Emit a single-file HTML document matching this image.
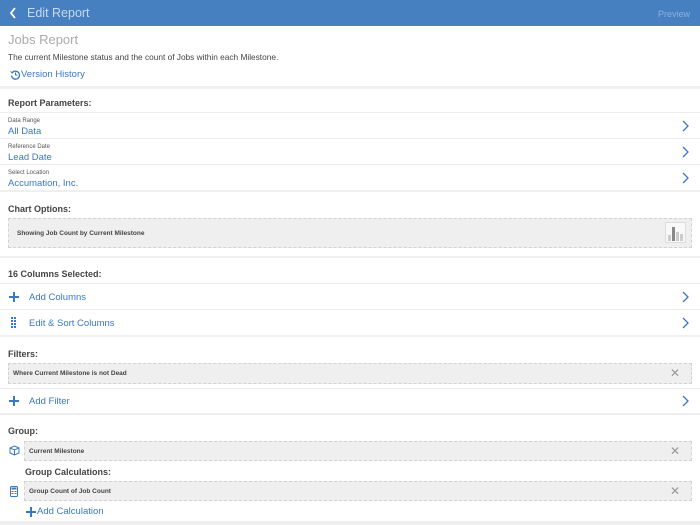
<!DOCTYPE html>
<html><head><meta charset="utf-8"><style>
*{margin:0;padding:0;box-sizing:border-box}
body{width:700px;height:525px;overflow:hidden;background:#fff;font-family:"Liberation Sans",Arial,sans-serif;position:relative;color:#333}
.a{position:absolute;white-space:nowrap}
.hdr{left:0;top:0;width:700px;height:26px;background:#4680c0}
.band{left:0;width:700px;background:#efefef}
.hl{left:0;width:700px;height:1px;background:#ececec}
.h{font-size:9px;font-weight:bold;color:#444}
.lbl{font-size:6px;color:#555}
.val{font-size:9.5px;color:#3a78c4}
.box{left:8px;width:684px;background:#efefef;border:1px dashed #d2d2d2}
.sm{font-size:6.5px;font-weight:bold;color:#444}
.chev{left:680px;width:10px;height:12px}
.x{font-size:12px;color:#999;left:670px}
</style></head><body>
<div class="a hdr"></div>
<svg class="a" style="left:8px;top:7px" width="10" height="12"><path d="M7 1 L3 6 L7 11" stroke="#fff" stroke-width="1.8" fill="none"/></svg>
<div class="a" style="left:27px;top:6px;font-size:12.5px;color:#c8d8ee">Edit Report</div>
<div class="a" style="left:658px;top:9px;font-size:9px;color:#8fb0dc">Preview</div>

<div class="a" style="left:8px;top:32px;font-size:13px;color:#aaa">Jobs Report</div>
<div class="a" style="left:8px;top:52px;font-size:8.3px;color:#444">The current Milestone status and the count of Jobs within each Milestone.</div>
<svg class="a" style="left:10px;top:69px" width="11" height="11"><path d="M2.5 3.5 A4 4 0 1 1 1.5 6.5" stroke="#3a78c4" stroke-width="1.3" fill="none"/><path d="M0.5 2.5 L2.5 4 L3.8 1.8" stroke="#3a78c4" stroke-width="1" fill="none"/><path d="M5.5 3.5 V6 H7.5" stroke="#3a78c4" stroke-width="1" fill="none"/></svg>
<div class="a val" style="left:21px;top:69px;font-size:9.5px">Version History</div>
<div class="a band" style="top:86px;height:3px"></div>

<div class="a h" style="left:8px;top:98px">Report Parameters:</div>
<div class="a hl" style="top:112px"></div>
<div class="a lbl" style="left:8px;top:118px">Data Range</div>
<div class="a val" style="left:8px;top:126px">All Data</div>
<div class="a hl" style="top:138px"></div>
<div class="a lbl" style="left:8px;top:144px">Reference Date</div>
<div class="a val" style="left:8px;top:152px">Lead Date</div>
<div class="a hl" style="top:164px"></div>
<div class="a lbl" style="left:8px;top:170px">Select Location</div>
<div class="a val" style="left:8px;top:178px">Accumation, Inc.</div>
<div class="a band" style="top:190px;height:2px"></div>
<svg class="a chev" style="top:120px"><path d="M3 1 L8 6 L3 11" stroke="#3a78c4" stroke-width="1.3" fill="none"/></svg>
<svg class="a chev" style="top:146px"><path d="M3 1 L8 6 L3 11" stroke="#3a78c4" stroke-width="1.3" fill="none"/></svg>
<svg class="a chev" style="top:172px"><path d="M3 1 L8 6 L3 11" stroke="#3a78c4" stroke-width="1.3" fill="none"/></svg>

<div class="a h" style="left:8px;top:204px">Chart Options:</div>
<div class="a box" style="top:218px;height:30px"></div>
<div class="a sm" style="left:17px;top:230px">Showing Job Count by Current Milestone</div>
<div class="a" style="left:665px;top:222px;width:21px;height:21px;border:1px solid #ddd;background:#f8f8f8"></div>
<svg class="a" style="left:667px;top:224px" width="17" height="17"><rect x="1" y="11" width="3" height="6" fill="#ccc"/><rect x="5" y="3" width="3" height="14" fill="#888"/><rect x="9" y="8" width="3" height="9" fill="#ccc"/><rect x="13" y="10" width="3" height="7" fill="#ccc"/></svg>
<div class="a band" style="top:256px;height:2px"></div>

<div class="a h" style="left:8px;top:269px">16 Columns Selected:</div>
<div class="a hl" style="top:283px"></div>
<svg class="a" style="left:9px;top:292px" width="10" height="10"><path d="M5 0V10M0 5H10" stroke="#3a78c4" stroke-width="2"/></svg>
<div class="a val" style="left:29px;top:292px">Add Columns</div>
<svg class="a chev" style="top:291px"><path d="M3 1 L8 6 L3 11" stroke="#3a78c4" stroke-width="1.3" fill="none"/></svg>
<div class="a hl" style="top:309px"></div>
<svg class="a" style="left:11px;top:317px" width="6" height="11"><g fill="#3a78c4"><rect x="0" y="0" width="2" height="2"/><rect x="3" y="0" width="2" height="2"/><rect x="0" y="3" width="2" height="2"/><rect x="3" y="3" width="2" height="2"/><rect x="0" y="6" width="2" height="2"/><rect x="3" y="6" width="2" height="2"/><rect x="0" y="9" width="2" height="2"/><rect x="3" y="9" width="2" height="2"/></g></svg>
<div class="a val" style="left:29px;top:318px">Edit &amp; Sort Columns</div>
<svg class="a chev" style="top:317px"><path d="M3 1 L8 6 L3 11" stroke="#3a78c4" stroke-width="1.3" fill="none"/></svg>
<div class="a band" style="top:335px;height:2px"></div>

<div class="a h" style="left:8px;top:349px">Filters:</div>
<div class="a box" style="top:363px;height:21px"></div>
<div class="a sm" style="left:13px;top:370px">Where Current Milestone is not Dead</div>
<div class="a x" style="top:366px">✕</div>
<div class="a hl" style="top:388px"></div>
<svg class="a" style="left:9px;top:396px" width="10" height="10"><path d="M5 0V10M0 5H10" stroke="#3a78c4" stroke-width="2"/></svg>
<div class="a val" style="left:29px;top:396px">Add Filter</div>
<svg class="a chev" style="top:395px"><path d="M3 1 L8 6 L3 11" stroke="#3a78c4" stroke-width="1.3" fill="none"/></svg>
<div class="a band" style="top:413px;height:2px"></div>

<div class="a h" style="left:8px;top:426px">Group:</div>
<svg class="a" style="left:9px;top:445px" width="11" height="11"><path d="M5.5 1 L10 3 V8 L5.5 10 L1 8 V3 Z M1 3 L5.5 5 L10 3 M5.5 5 V10" stroke="#3a78c4" stroke-width="1" fill="none"/></svg>
<div class="a box" style="left:24px;width:668px;top:441px;height:20px"></div>
<div class="a sm" style="left:29px;top:448px">Current Milestone</div>
<div class="a x" style="top:444px">✕</div>
<div class="a h" style="left:25px;top:467px">Group Calculations:</div>
<svg class="a" style="left:10px;top:486px" width="8" height="11"><rect x="0.5" y="0.5" width="7" height="10" rx="1" fill="none" stroke="#3a78c4"/><rect x="1.5" y="1.5" width="5" height="2" fill="#3a78c4"/><g fill="#3a78c4"><rect x="1.5" y="5" width="2" height="1"/><rect x="4.5" y="5" width="2" height="1"/><rect x="1.5" y="7" width="2" height="1"/><rect x="4.5" y="7" width="2" height="1"/></g></svg>
<div class="a box" style="left:24px;width:668px;top:481px;height:20px"></div>
<div class="a sm" style="left:29px;top:488px">Group Count of Job Count</div>
<div class="a x" style="top:484px">✕</div>
<svg class="a" style="left:26px;top:507px" width="10" height="10"><path d="M5 0V10M0 5H10" stroke="#3a78c4" stroke-width="2"/></svg>
<div class="a val" style="left:37px;top:506px">Add Calculation</div>
<div class="a band" style="top:521px;height:4px"></div>
</body></html>
